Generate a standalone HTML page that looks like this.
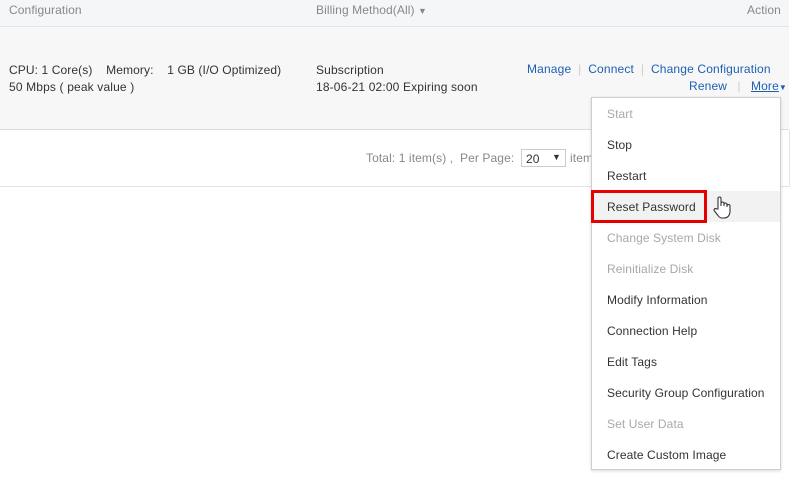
<!DOCTYPE html>
<html><head><meta charset="utf-8"><style>
*{margin:0;padding:0;box-sizing:border-box}
body{width:804px;height:477px;background:#fff;font-family:"Liberation Sans",Tahoma,sans-serif;font-size:12px;color:#333;position:relative;overflow:hidden;letter-spacing:0.1px}
.abs{position:absolute;white-space:nowrap}
.hdr{position:absolute;left:0;top:0;width:789px;height:27px;background:#f5f6f7;border-bottom:1px solid #e3e6e8}
.row{position:absolute;left:0;top:27px;width:789px;height:103px;background:#f7f7f7;border-bottom:1px solid #dcdcdc}
.pg{position:absolute;left:0;top:130px;width:790px;height:57px;border-bottom:1px solid #e3e3e3;border-right:1px solid #e3e3e3}
.gray{color:#888}
a{color:#1d5fb4;text-decoration:none;letter-spacing:0.15px}
.sep{color:#ccc}
.menu{position:absolute;left:591px;top:97px;width:190px;height:373px;background:#fff;border:1px solid #cfcfcf;box-shadow:0 1px 3px rgba(0,0,0,.15)}
.mi{height:31px;line-height:33px;padding-left:15px;color:#333}
.mi.d{color:#a8a8a8}
.mi.h{background:#f2f2f2}
</style></head><body>
<div class="hdr"></div>
<div class="abs gray" style="left:9px;top:3px">Configuration</div>
<div class="abs gray" style="left:316px;top:3px">Billing Method(All) <span style="font-size:9px">▼</span></div>
<div class="abs gray" style="left:747px;top:3px">Action</div>
<div class="row"></div>
<div class="abs" style="left:9px;top:63px;letter-spacing:0.1px">CPU: 1 Core(s)&nbsp;&nbsp;&nbsp;&nbsp;Memory:&nbsp;&nbsp;&nbsp;&nbsp;1 GB (I/O Optimized)</div>
<div class="abs" style="left:9px;top:80px;letter-spacing:0.15px">50 Mbps ( peak value )</div>
<div class="abs" style="left:316px;top:63px;letter-spacing:0.15px">Subscription</div>
<div class="abs" style="left:316px;top:80px;letter-spacing:0.15px">18-06-21 02:00 Expiring soon</div>
<div class="abs" style="left:527px;top:62px"><a>Manage</a>&nbsp;&nbsp;<span class="sep">|</span>&nbsp;&nbsp;<a>Connect</a>&nbsp;&nbsp;<span class="sep">|</span>&nbsp;&nbsp;<a>Change Configuration</a></div>
<div class="abs" style="left:689px;top:79px"><a>Renew</a>&nbsp;&nbsp;&nbsp;<span class="sep">|</span>&nbsp;&nbsp;&nbsp;<a style="text-decoration:underline">More</a><a style="font-size:8px">▼</a></div>
<div class="pg"></div>
<div class="abs gray" style="left:366px;top:151px">Total: 1 item(s) ,&nbsp;&nbsp;Per Page:</div>
<div class="abs" style="left:521px;top:149px;width:45px;height:18px;border:1px solid #ccc;background:#fff;padding:2px 0 0 4px">20<span style="position:absolute;left:30px;top:2px;font-size:9px">▼</span></div>
<div class="abs gray" style="left:570px;top:151px">item</div>
<div class="menu">
<div class="mi d">Start</div>
<div class="mi">Stop</div>
<div class="mi">Restart</div>
<div class="mi h">Reset Password</div>
<div class="mi d">Change System Disk</div>
<div class="mi d">Reinitialize Disk</div>
<div class="mi">Modify Information</div>
<div class="mi">Connection Help</div>
<div class="mi">Edit Tags</div>
<div class="mi">Security Group Configuration</div>
<div class="mi d">Set User Data</div>
<div class="mi">Create Custom Image</div>
</div>
<div class="abs" style="left:591px;top:190px;width:116px;height:33px;border:3px solid #e60000"></div>
<svg class="abs" style="left:713px;top:195px" width="20" height="26" viewBox="0 0 20 26"><path d="M5 14V3.5a1.5 1.5 0 0 1 3 0V11V8.5a1.5 1.5 0 0 1 3 0V11V9.5a1.5 1.5 0 0 1 3 0V12V11a1.5 1.5 0 0 1 3 0v5c0 4-2 7-6 7H9c-2 0-3-1-4-2.5L1.5 16a1.4 1.4 0 0 1 2-2z" fill="#fff" stroke="#333" stroke-width="1.1"/></svg>
</body></html>
